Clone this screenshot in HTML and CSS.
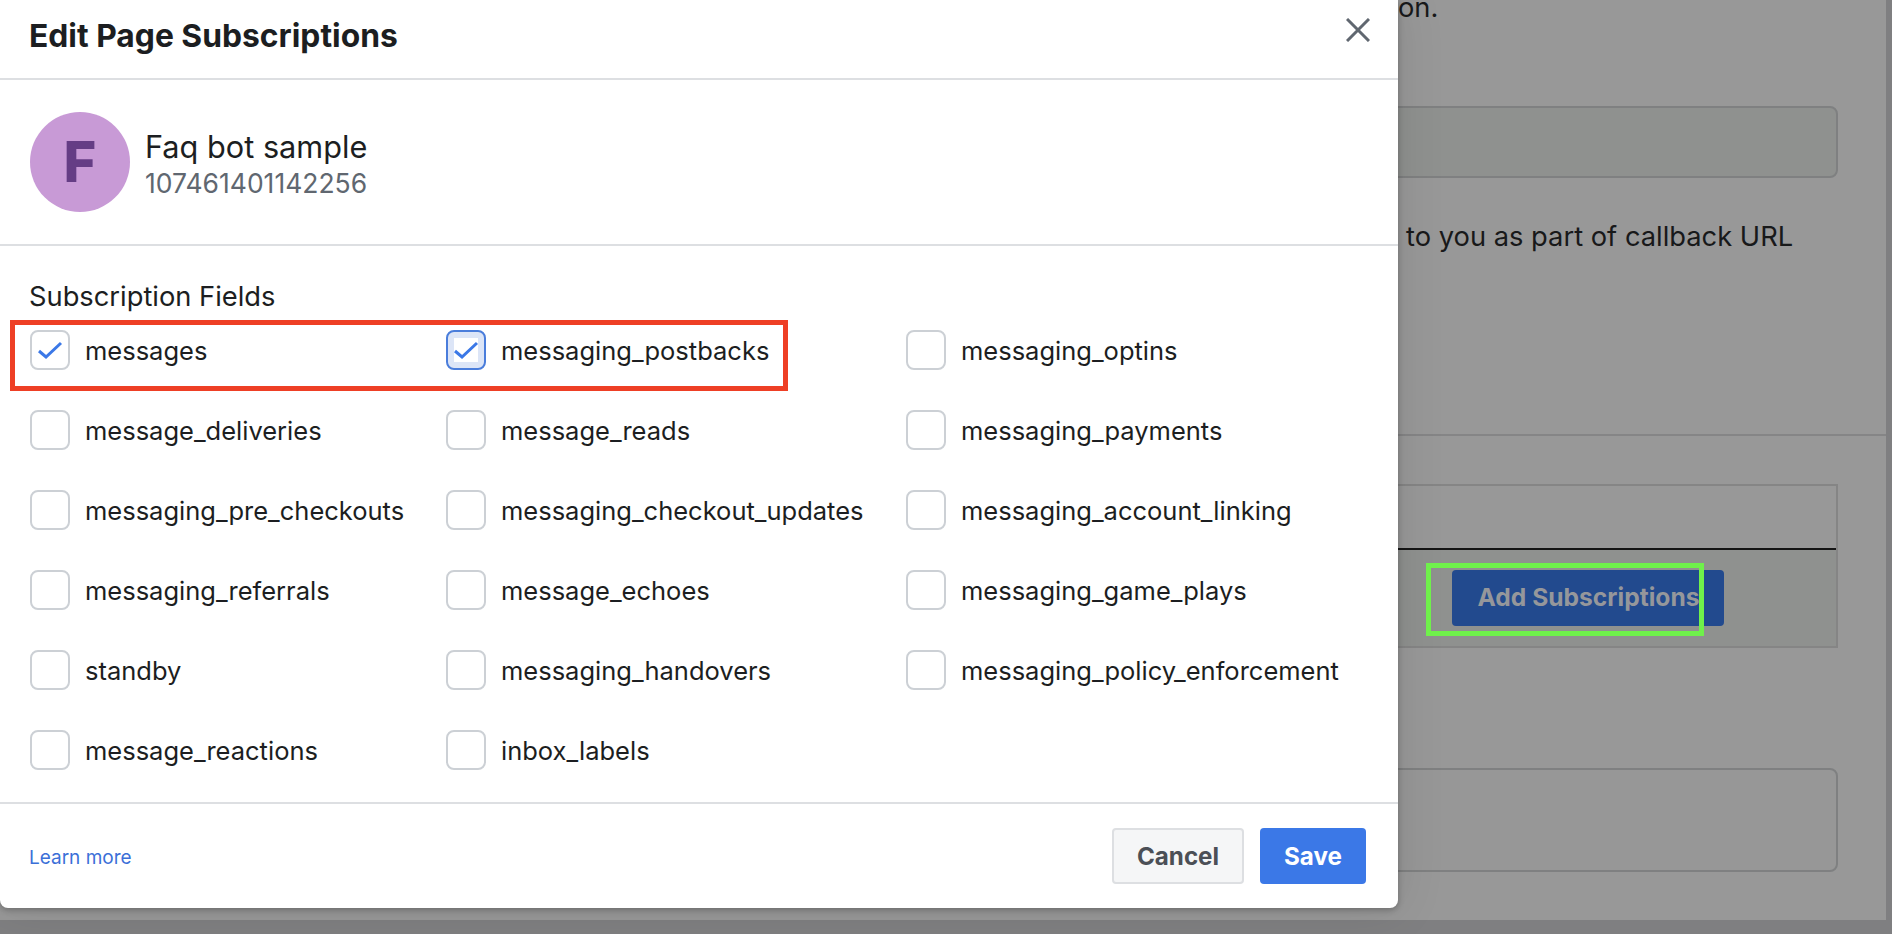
FILE: index.html
```html
<!DOCTYPE html>
<html lang="en">
<head>
  <meta charset="UTF-8" />
  <title>Edit Page Subscriptions</title>
  <link rel="stylesheet" href="styles.css">
</head>
<body>
  <div class="page">
    <div class="content">
      <p class="note first">on.</p>
      <div class="input-box"></div>
      <p class="note second">to you as part of callback URL</p>
    </div>
    <div class="divider"></div>
    <div class="content">
      <div class="sub-table">
        <div class="sub-head"></div>
        <div class="sub-row">
          <button class="add-btn">Add Subscriptions</button>
        </div>
      </div>
      <div class="input-box tall"></div>
    </div>
  </div>

  <div class="modal">
    <div class="modal-header">
      <h1>Edit Page Subscriptions</h1>
      <svg class="close" width="24" height="24" viewBox="0 0 24 24">
        <path d="M1 1 L23 23 M23 1 L1 23" stroke="#606770" stroke-width="3" fill="none" />
      </svg>
    </div>

    <div class="profile">
      <div class="avatar">F</div>
      <div class="page-info">
        <div class="page-name">Faq bot sample</div>
        <div class="page-id">107461401142256</div>
      </div>
    </div>

    <div class="fields">
      <div class="fields-title">Subscription Fields</div>
      <div class="field-grid">
        <label class="field"><span class="box"><svg viewBox="0 0 40 40"><path d="M9 21 L16 27 L31 13" /></svg></span>messages</label>
        <label class="field"><span class="box focus"><svg viewBox="0 0 40 40"><path d="M9 21 L16 27 L31 13" /></svg></span>messaging_postbacks</label>
        <label class="field"><span class="box"></span>messaging_optins</label>

        <label class="field"><span class="box"></span>message_deliveries</label>
        <label class="field"><span class="box"></span>message_reads</label>
        <label class="field"><span class="box"></span>messaging_payments</label>

        <label class="field"><span class="box"></span>messaging_pre_checkouts</label>
        <label class="field"><span class="box"></span>messaging_checkout_updates</label>
        <label class="field"><span class="box"></span>messaging_account_linking</label>

        <label class="field"><span class="box"></span>messaging_referrals</label>
        <label class="field"><span class="box"></span>message_echoes</label>
        <label class="field"><span class="box"></span>messaging_game_plays</label>

        <label class="field"><span class="box"></span>standby</label>
        <label class="field"><span class="box"></span>messaging_handovers</label>
        <label class="field"><span class="box"></span>messaging_policy_enforcement</label>

        <label class="field"><span class="box"></span>message_reactions</label>
        <label class="field"><span class="box"></span>inbox_labels</label>
      </div>
    </div>

    <div class="modal-footer">
      <a class="learn" href="#">Learn more</a>
      <div class="actions">
        <button class="btn cancel">Cancel</button>
        <button class="btn save">Save</button>
      </div>
    </div>
  </div>

  <!-- annotations drawn on top of the screenshot -->
  <div class="mark red"></div>
  <div class="mark green"></div>
</body>
</html>
```

FILE: styles.css
```css
* {
  box-sizing: border-box;
}

html,
body {
  margin: 0;
  padding: 0;
  height: 934px;
  overflow: hidden;
}

body {
  font-family: 'Inter', 'Liberation Sans', sans-serif;
  background: #7f7f81;
  color: #1c1e21;
  position: relative;
}

/* dimmed page behind the dialog */
.page {
  width: 1886px;
  height: 920px;
  background: #989898;
}

.content {
  margin-left: 1380px;
  width: 458px;
}

.note {
  margin: 0;
  font-size: 27.3px;
  line-height: 32px;
  color: #18191a;
  white-space: nowrap;
}

.note.first {
  padding-left: 18px;
  height: 106px;
  line-height: 16px;
}

.note.second {
  padding-left: 26px;
  margin-top: 43px;
  height: 213px;
}

.input-box {
  height: 72px;
  background: #8f918f;
  border: 2px solid #7f8081;
  border-radius: 8px;
}

.input-box.tall {
  height: 104px;
  margin-top: 120px;
  background: #979797;
}

.divider {
  height: 2px;
  background: #858586;
  margin-left: 1380px;
}

.sub-table {
  margin-top: 48px;
  height: 164px;
  border: 2px solid #858585;
  display: flex;
  flex-direction: column;
}

.sub-head {
  height: 66px;
  flex: none;
  border-bottom: 2px solid #151515;
  margin-top: -2px;
}

.sub-row {
  flex: 1;
  background: #8f918f;
  padding: 20px 0 0 70px;
}

.add-btn {
  display: block;
  width: 272px;
  height: 56px;
  padding: 0 0 2px 1px;
  background: #224a8e;
  color: #95979b;
  border: none;
  border-radius: 4px;
  font-family: inherit;
  font-size: 24.6px;
  font-weight: 700;
}

/* dialog */
.modal {
  position: absolute;
  left: 0;
  top: 0;
  width: 1398px;
  height: 908px;
  background: #ffffff;
  border-radius: 0 0 8px 8px;
  box-shadow: 0 2px 6px rgba(0, 0, 0, 0.25), 0 0 50px rgba(0, 0, 0, 0.1);
  display: flex;
  flex-direction: column;
}

.modal-header {
  height: 80px;
  flex: none;
  padding: 0 28px 8px 29px;
  border-bottom: 2px solid #dddfe2;
  display: flex;
  align-items: center;
  justify-content: space-between;
}

.modal-header h1 {
  margin: 0;
  font-size: 31.8px;
  font-weight: 700;
}

.close {
  display: block;
  margin-bottom: 10px;
}

.profile {
  height: 166px;
  flex: none;
  padding-left: 30px;
  border-bottom: 2px solid #dddfe2;
  display: flex;
  align-items: center;
  gap: 15px;
}

.page-info {
  padding-top: 4px;
}

.avatar {
  width: 100px;
  height: 100px;
  border-radius: 50%;
  background: #c89ad6;
  color: #653d85;
  font-size: 56px;
  font-weight: 800;
  display: flex;
  align-items: center;
  justify-content: center;
}

.page-name {
  font-size: 30.7px;
  line-height: 38px;
}

.page-id {
  font-size: 26.5px;
  line-height: 34px;
  color: #606770;
}

.fields {
  flex: 1;
  padding: 35px 0 0 30px;
  border-bottom: 2px solid #dddfe2;
}

.fields-title {
  font-size: 27.3px;
  line-height: 32px;
  margin-bottom: 17px;
  margin-left: -1px;
}

.field-grid {
  display: grid;
  grid-template-columns: 416px 460px 1fr;
  grid-auto-rows: 40px;
  row-gap: 40px;
}

.field {
  display: flex;
  align-items: flex-start;
  gap: 15px;
  font-size: 25.5px;
  line-height: 42px;
  white-space: nowrap;
}

.box {
  width: 40px;
  height: 40px;
  flex: none;
  border: 2px solid #ccd0d5;
  border-radius: 8px;
  background: #ffffff;
  position: relative;
}

.box svg {
  position: absolute;
  left: -2px;
  top: -2px;
  width: 40px;
  height: 40px;
}

.box path {
  fill: none;
  stroke: #3b78e7;
  stroke-width: 3;
}

.box.focus {
  border: 2px solid #4a7ddb;
  background: #dce5f7;
}

.box.focus::before {
  content: "";
  position: absolute;
  left: 6px;
  top: 6px;
  width: 24px;
  height: 24px;
  background: #ffffff;
}

.modal-footer {
  height: 104px;
  flex: none;
  padding: 0 32px 0 29px;
  display: flex;
  align-items: center;
  justify-content: space-between;
}

.learn {
  font-size: 19px;
  color: #3b6fd8;
  text-decoration: none;
  padding-top: 2px;
}

.actions {
  display: flex;
  gap: 16px;
}

.btn {
  height: 56px;
  border-radius: 4px;
  font-family: inherit;
  font-size: 24.2px;
  font-weight: 700;
  padding: 0;
}

.btn.cancel {
  width: 132px;
  background: #f5f6f7;
  border: 2px solid #dddfe2;
  color: #4b4f56;
}

.btn.save {
  width: 106px;
  background: #3b78e7;
  border: none;
  color: #ffffff;
}

/* coloured boxes somebody drew over the screenshot */
.mark {
  position: absolute;
  border-style: solid;
  border-width: 5px;
}

.mark.red {
  left: 10px;
  top: 320px;
  width: 778px;
  height: 71px;
  border-color: #ee3f25;
}

.mark.green {
  left: 1426px;
  top: 563px;
  width: 278px;
  height: 73px;
  border-color: #6ff14b;
}
```
